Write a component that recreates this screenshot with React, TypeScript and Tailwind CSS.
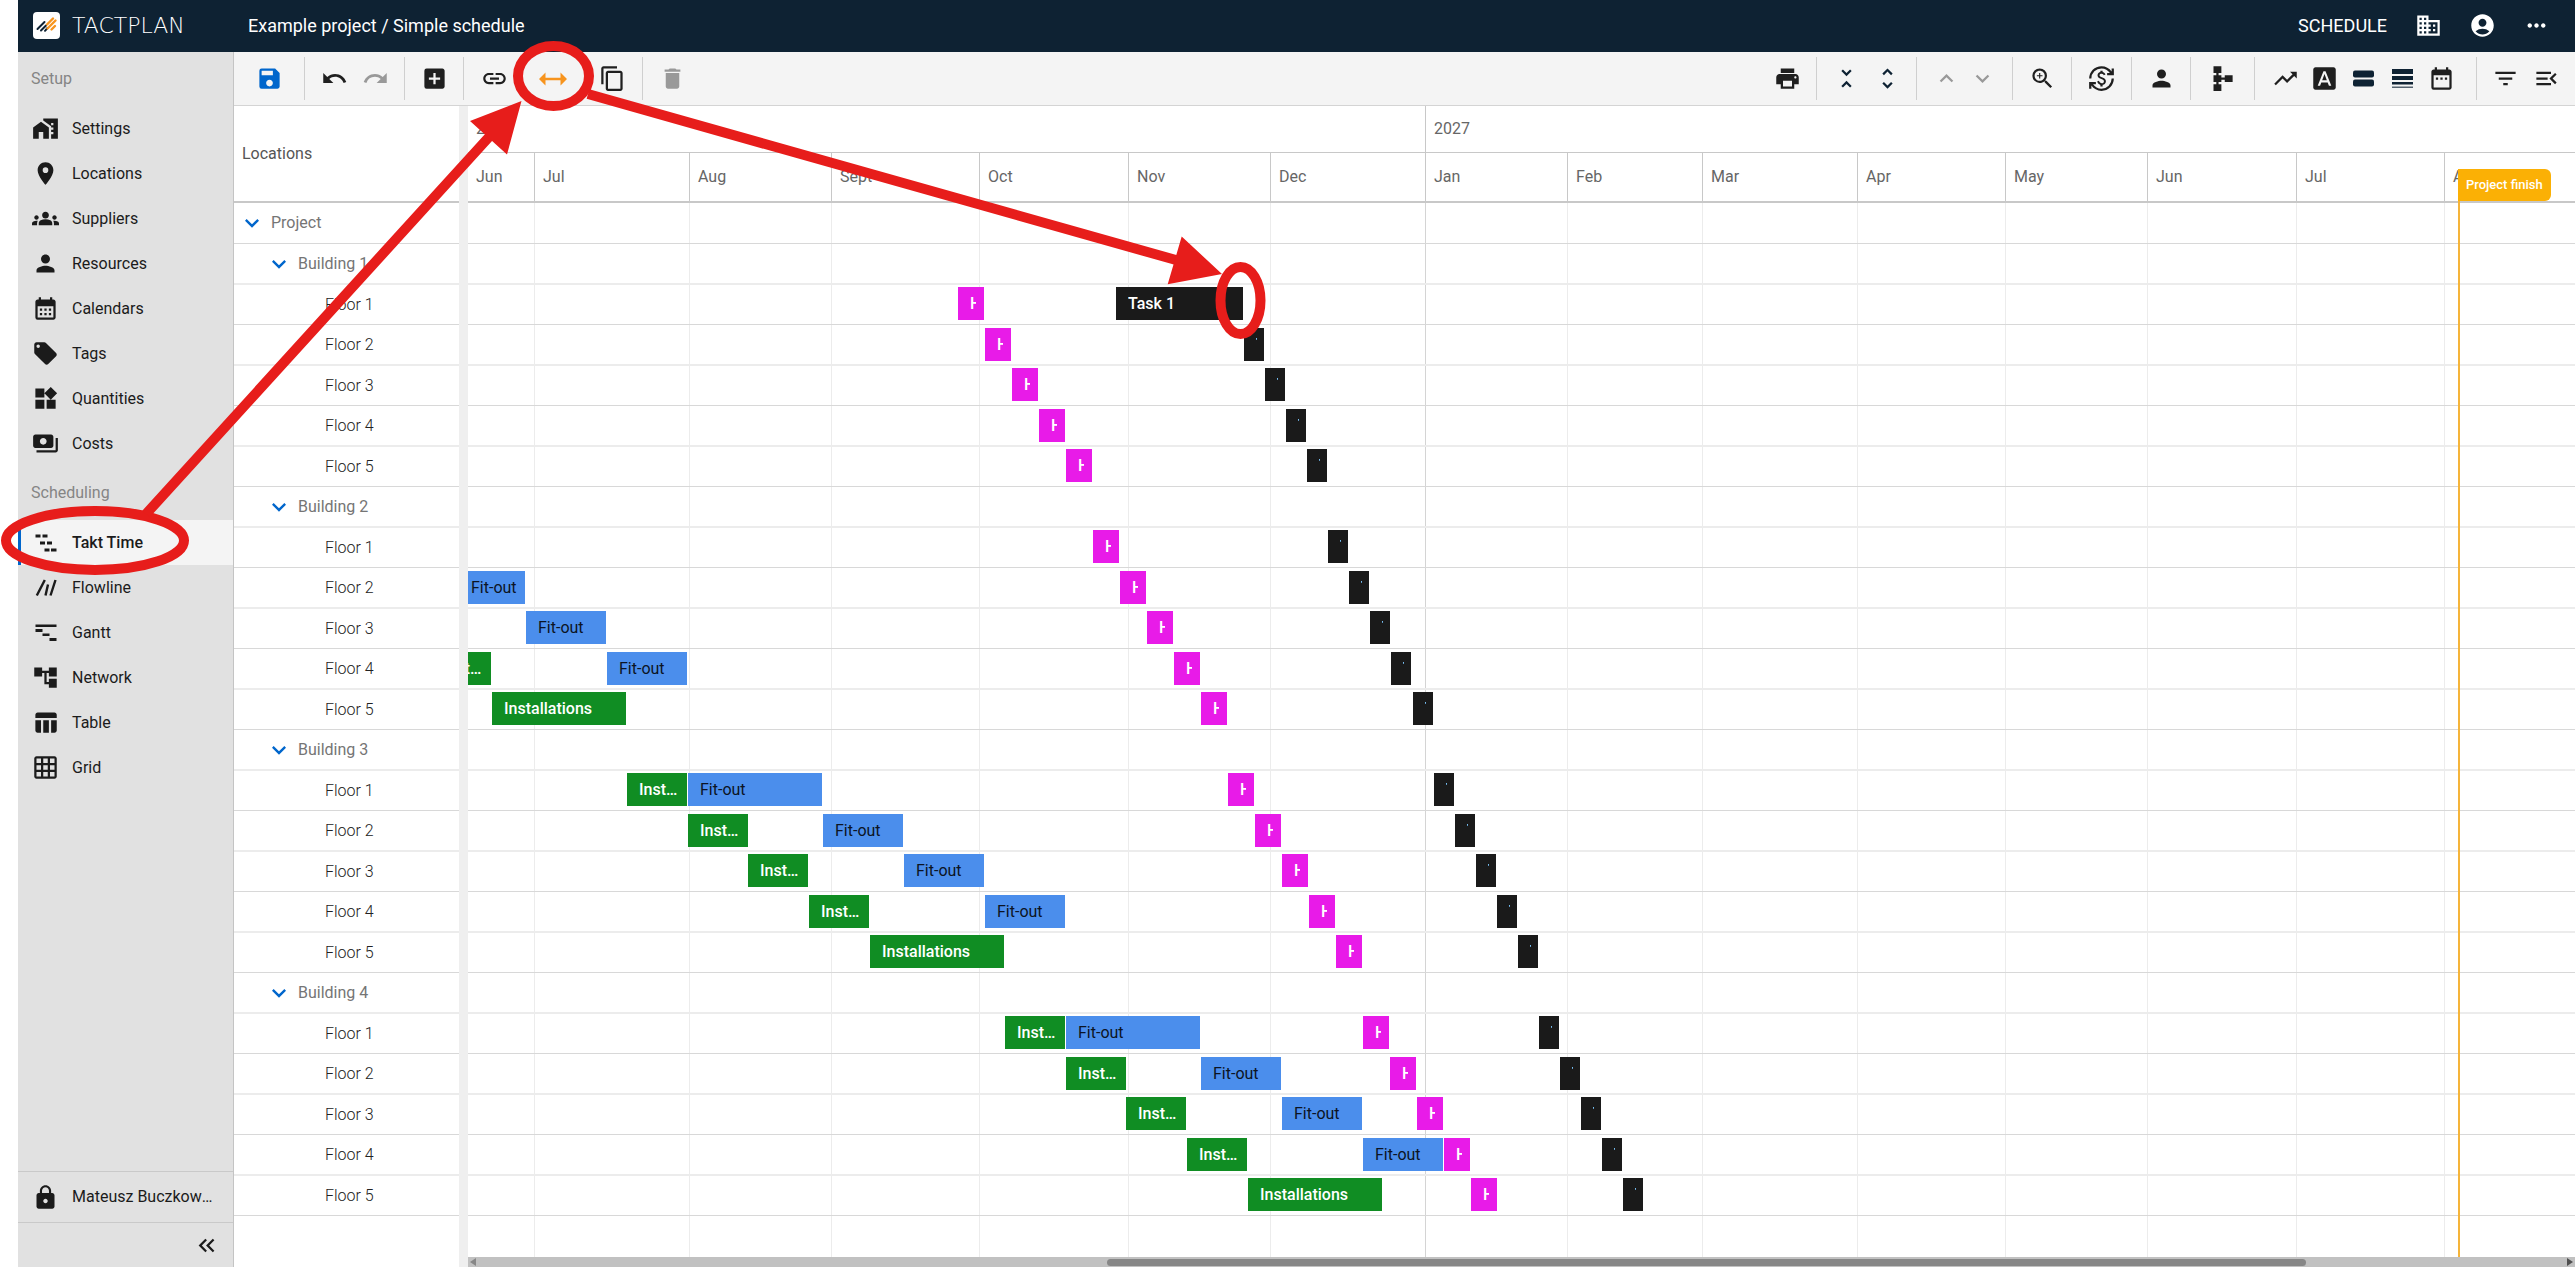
import type { ComponentType, ReactNode } from "react";
import {
  MdAccountCircle,
  MdAccountTree,
  MdAddBox,
  MdBusiness,
  MdCalendarMonth,
  MdContentCopy,
  MdCurrencyExchange,
  MdDateRange,
  MdDelete,
  MdExpandLess,
  MdExpandMore,
  MdFilterList,
  MdFontDownload,
  MdGridOn,
  MdGroups,
  MdKeyboardDoubleArrowLeft,
  MdLink,
  MdLocalOffer,
  MdLocationOn,
  MdLock,
  MdMapsHomeWork,
  MdMenuOpen,
  MdMoreHoriz,
  MdPayments,
  MdPerson,
  MdPrint,
  MdRedo,
  MdSave,
  MdSchema,
  MdTableChart,
  MdTrendingUp,
  MdUndo,
  MdUnfoldLess,
  MdUnfoldMore,
  MdWidgets,
  MdZoomIn,
} from "react-icons/md";

type IconType = ComponentType<{ className?: string }>;

/* ---------- custom icons ---------- */

function TaktIcon({ className }: { className?: string }) {
  return (
    <svg viewBox="0 0 27 27" className={className} fill="currentColor" aria-hidden="true">
      <path d="M3.5 5.5h5v3h-5zM10.5 5.5h5v3h-5zM8 12.5h5v3H8zM15 12.5h5v3h-5zM12.500 19.500h5v3h-5zM19 19.500h5.500v3H19z" />
    </svg>
  );
}

function FlowlineIcon({ className }: { className?: string }) {
  return (
    <svg viewBox="0 0 27 27" className={className} fill="none" stroke="currentColor" strokeWidth="2.4" aria-hidden="true">
      <path d="M4.800 21.500L12.800 6M13.500 21.500L16 10.500M18.500 21.500L23.500 6" />
    </svg>
  );
}

function GanttIcon({ className }: { className?: string }) {
  return (
    <svg viewBox="0 0 27 27" className={className} fill="currentColor" aria-hidden="true">
      <path d="M3.500 5.500h21V8h-21zM3.500 10h7v3h-7zM10.500 14.500h7v2.500h-7zM17.500 19h7v3h-7z" />
    </svg>
  );
}

function ResizeIcon({ className }: { className?: string }) {
  return (
    <svg viewBox="0 0 28 28" className={className} fill="currentColor" aria-hidden="true">
      <path d="M0 14l6.500-6.500v5.300h15V7.500L28 14l-6.500 6.500v-5.300h-15v5.300z" />
    </svg>
  );
}

function TwoRowsIcon({ className }: { className?: string }) {
  return (
    <svg viewBox="0 0 27 27" className={className} fill="#0e2233" aria-hidden="true">
      <rect x="3" y="5.500" width="21" height="7" rx="2" />
      <rect x="3" y="14.500" width="21" height="7" rx="2" />
    </svg>
  );
}

function ManyRowsIcon({ className }: { className?: string }) {
  return (
    <svg viewBox="0 0 27 27" className={className} fill="#0e2233" aria-hidden="true">
      <path d="M3 4h21v5H3zM3 11h21v4H3zM3 17h21v2.500H3z" />
      <path d="M3 21.500h21v1.500H3z" opacity="0.7" />
    </svg>
  );
}

function LogoMark() {
  return (
    <svg viewBox="0 0 27 27" className="size-[27px]" fill="none" strokeLinecap="round" strokeWidth="2" aria-hidden="true">
      <rect width="27" height="27" rx="4" fill="#fff" />
      <path d="M4.500 17L11.500 10M8 18.500L13 13.500M12 18.800L14.500 16" stroke="#0e2233" />
      <path d="M14 12.500L20 6.500M14.500 16.500L22.500 8.500M18.500 17.500L22 14" stroke="#f7941d" strokeWidth="2.400" />
    </svg>
  );
}

/* ---------- header ---------- */

function Header() {
  return (
    <header className="flex h-[52px] shrink-0 items-center bg-[#0e2233] pb-px pl-[15px] text-white">
      <a href="#home" className="flex w-[215px] items-center gap-3">
        <LogoMark />
        <span className="font-['DejaVu_Sans',sans-serif] text-[22px] leading-6 font-extralight">TACTPLAN</span>
      </a>
      <h1 className="flex-1 text-[18px] leading-6">Example project / Simple schedule</h1>
      <nav className="flex items-center pr-3">
        <a href="#schedule" className="mr-[14px] text-[18px] leading-6">
          SCHEDULE
        </a>
        <HeaderButton label="Company" icon={MdBusiness} />
        <HeaderButton label="Account" icon={MdAccountCircle} />
        <HeaderButton label="More" icon={MdMoreHoriz} />
      </nav>
    </header>
  );
}

function HeaderButton({ label, icon: Icon }: { label: string; icon: IconType }) {
  return (
    <button type="button" aria-label={label} className="flex w-[54px] justify-center">
      <Icon className="size-[27px]" />
    </button>
  );
}

/* ---------- sidebar ---------- */

const setupItems: [string, IconType][] = [
  ["Settings", MdMapsHomeWork],
  ["Locations", MdLocationOn],
  ["Suppliers", MdGroups],
  ["Resources", MdPerson],
  ["Calendars", MdCalendarMonth],
  ["Tags", MdLocalOffer],
  ["Quantities", MdWidgets],
  ["Costs", MdPayments],
];

const schedulingItems: [string, IconType][] = [
  ["Takt Time", TaktIcon],
  ["Flowline", FlowlineIcon],
  ["Gantt", GanttIcon],
  ["Network", MdAccountTree],
  ["Table", MdTableChart],
  ["Grid", MdGridOn],
];

function SideGroup({ title, items }: { title: string; items: [string, IconType][] }) {
  return (
    <section>
      <h2 className="flex h-[54px] items-center px-[13px] text-[#858585]">{title}</h2>
      <ul>
        {items.map(([name, Icon]) => {
          const active = name === "Takt Time";
          return (
            <li key={name}>
              <a
                href={"#" + name}
                className={
                  active
                    ? "flex h-[45px] items-center gap-[13px] border-l-3 border-[#0066cc] bg-[#f4f4f4] pl-[11px] font-medium"
                    : "flex h-[45px] items-center gap-[13px] border-l-3 border-transparent pl-[11px]"
                }
              >
                <Icon className="size-[27px]" />
                {name}
              </a>
            </li>
          );
        })}
      </ul>
    </section>
  );
}

function Sidebar() {
  return (
    <aside className="flex w-[216px] shrink-0 flex-col border-r border-[#c4c4c4] bg-[#e1e1e1] text-[#1b1b1b]">
      <nav className="flex-1">
        <SideGroup title="Setup" items={setupItems} />
        <SideGroup title="Scheduling" items={schedulingItems} />
      </nav>
      <button type="button" className="flex h-[51px] items-center gap-[13px] border-t border-[#c9c9c9] px-[14px]">
        <MdLock className="size-[27px] shrink-0" />
        <span className="truncate">Mateusz Buczkowski</span>
      </button>
      <div className="flex h-[45px] items-center justify-end border-t border-[#c9c9c9] pr-[13px]">
        <button type="button" aria-label="Collapse sidebar">
          <MdKeyboardDoubleArrowLeft className="size-[27px]" />
        </button>
      </div>
    </aside>
  );
}

/* ---------- toolbar ---------- */

function Group({ width, last, children }: { width: string; last?: boolean; children: ReactNode }) {
  return (
    <div
      className={
        "flex h-[43px] items-center justify-center " + width + (last ? "" : " border-r border-[#cfcfcf]")
      }
    >
      {children}
    </div>
  );
}

function Tool({
  label,
  icon: Icon,
  width = "w-[41px]",
  tone = "text-[#1f1f1f]",
  size = "size-[27px]",
}: {
  label: string;
  icon: IconType;
  width?: string;
  tone?: string;
  size?: string;
}) {
  return (
    <button type="button" aria-label={label} className={"flex justify-center " + width + " " + tone}>
      <Icon className={size + " shrink-0"} />
    </button>
  );
}

function Toolbar() {
  return (
    <div role="toolbar" className="flex h-[54px] shrink-0 items-center justify-between border-b border-[#d4d4d4] bg-[#f4f4f4]">
      <div className="flex">
        <Group width="w-[71px]">
          <Tool label="Save" icon={MdSave} tone="text-[#0066cc]" />
        </Group>
        <Group width="w-[100px]">
          <Tool label="Undo" icon={MdUndo} />
          <Tool label="Redo" icon={MdRedo} tone="text-[#999999]" />
        </Group>
        <Group width="w-[59px]">
          <Tool label="Add" icon={MdAddBox} />
        </Group>
        <Group width="w-[179px]">
          <Tool label="Link" icon={MdLink} width="w-[59px]" />
          <Tool label="Resize" icon={ResizeIcon} width="w-[59px]" tone="text-[#f7941d]" size="size-[28px]" />
          <Tool label="Copy" icon={MdContentCopy} width="w-[59px]" />
        </Group>
        <Group width="w-[59px]" last>
          <Tool label="Delete" icon={MdDelete} tone="text-[#999999]" />
        </Group>
      </div>
      <div className="flex">
        <Group width="w-[59px]">
          <Tool label="Print" icon={MdPrint} />
        </Group>
        <Group width="w-[100px]">
          <Tool label="Collapse rows" icon={MdUnfoldLess} tone="text-[#0e2233]" />
          <Tool label="Expand rows" icon={MdUnfoldMore} tone="text-[#0e2233]" />
        </Group>
        <Group width="w-[96px]">
          <Tool label="Previous" icon={MdExpandLess} width="w-[36px]" tone="text-[#999999]" />
          <Tool label="Next" icon={MdExpandMore} width="w-[36px]" tone="text-[#999999]" />
        </Group>
        <Group width="w-[59px]">
          <Tool label="Zoom in" icon={MdZoomIn} />
        </Group>
        <Group width="w-[60px]">
          <Tool label="Currency" icon={MdCurrencyExchange} />
        </Group>
        <Group width="w-[59px]">
          <Tool label="People" icon={MdPerson} />
        </Group>
        <Group width="w-[64px]">
          <Tool label="Structure" icon={MdSchema} />
        </Group>
        <Group width="w-[222px] pr-1">
          <Tool label="Progress" icon={MdTrendingUp} width="w-[39px]" />
          <Tool label="Labels" icon={MdFontDownload} width="w-[39px]" />
          <Tool label="Two rows" icon={TwoRowsIcon} width="w-[39px]" />
          <Tool label="Many rows" icon={ManyRowsIcon} width="w-[39px]" />
          <Tool label="Dates" icon={MdDateRange} width="w-[39px]" />
        </Group>
        <Group width="w-[98px]" last>
          <Tool label="Filter" icon={MdFilterList} />
          <Tool label="Open panel" icon={MdMenuOpen} />
        </Group>
      </div>
    </div>
  );
}

/* ---------- schedule data ---------- */

type Kind = "install" | "fit" | "hand" | "task";
type Bar = [kind: Kind, x: number, width: number];

const floorBars: Bar[][][] = [
  [
    [["hand", 490, 26], ["task", 648, 127]],
    [["hand", 517, 26], ["task", 776, 20]],
    [["hand", 544, 26], ["task", 797, 20]],
    [["hand", 571, 26], ["task", 818, 20]],
    [["hand", 598, 26], ["task", 839, 20]],
  ],
  [
    [["hand", 625, 26], ["task", 860, 20]],
    [["fit", -9, 66], ["hand", 652, 26], ["task", 881, 20]],
    [["fit", 58, 80], ["hand", 679, 26], ["task", 902, 20]],
    [["install", -37, 60], ["fit", 139, 80], ["hand", 706, 26], ["task", 923, 20]],
    [["install", 24, 134], ["hand", 733, 26], ["task", 945, 20]],
  ],
  [
    [["install", 159, 60], ["fit", 220, 134], ["hand", 760, 26], ["task", 966, 20]],
    [["install", 220, 60], ["fit", 355, 80], ["hand", 787, 26], ["task", 987, 20]],
    [["install", 280, 60], ["fit", 436, 80], ["hand", 814, 26], ["task", 1008, 20]],
    [["install", 341, 60], ["fit", 517, 80], ["hand", 841, 26], ["task", 1029, 20]],
    [["install", 402, 134], ["hand", 868, 26], ["task", 1050, 20]],
  ],
  [
    [["install", 537, 60], ["fit", 598, 134], ["hand", 895, 26], ["task", 1071, 20]],
    [["install", 598, 60], ["fit", 733, 80], ["hand", 922, 26], ["task", 1092, 20]],
    [["install", 658, 60], ["fit", 814, 80], ["hand", 949, 26], ["task", 1113, 20]],
    [["install", 719, 60], ["fit", 895, 80], ["hand", 976, 26], ["task", 1134, 20]],
    [["install", 780, 134], ["hand", 1003, 26], ["task", 1155, 20]],
  ],
];

type Row = { name: string; level: 0 | 1 | 2; bars: Bar[] };

const rows: Row[] = [
  { name: "Project", level: 0, bars: [] },
  ...floorBars.flatMap((floors, b): Row[] => [
    { name: `Building ${b + 1}`, level: 1, bars: [] },
    ...floors.map((bars, f): Row => ({ name: `Floor ${f + 1}`, level: 2, bars })),
  ]),
];

function rowClass(index: number) {
  if (index === 0) return "h-[41px] border-b border-[#d8d8d8]";
  return index % 2 ? "h-[41px] border-b-2 border-[#ececec]" : "h-[40px] border-b border-[#d8d8d8]";
}

const kindClass: Record<Kind, string> = {
  install: "bg-[#108d23] text-white font-medium",
  fit: "bg-[#4b8eec] text-[#0c1424]",
  hand: "bg-[#e81be8] text-white font-medium",
  task: "bg-[#1a1a1a] text-white font-medium",
};

const kindLabel: Record<Kind, string> = {
  install: "Installations",
  fit: "Fit-out",
  hand: "H",
  task: "Task 1",
};

/* ---------- locations tree ---------- */

function Locations() {
  return (
    <div className="w-[225px] shrink-0 bg-white">
      <div className="flex h-[97px] items-center border-b-2 border-[#c8c8c8] px-2 text-[#555555]">Locations</div>
      <ul>
        {rows.map((row, i) => (
          <li key={i} className={"flex items-center " + rowClass(i)}>
            {row.level === 2 ? (
              <span className="pl-[91px] font-light text-[#222222]">{row.name}</span>
            ) : (
              <button
                type="button"
                aria-expanded="true"
                className={
                  row.level === 0
                    ? "flex items-center gap-[5px] pl-[4px] text-[#757575]"
                    : "flex items-center gap-[5px] pl-[31px] text-[#757575]"
                }
              >
                <MdExpandMore className="size-[28px] text-[#0066cc]" />
                {row.name}
              </button>
            )}
          </li>
        ))}
      </ul>
    </div>
  );
}

/* ---------- timeline ---------- */

const months: [string, string][] = [
  ["Jun", "w-[67px]"],
  ["Jul", "w-[155px]"],
  ["Aug", "w-[142px]"],
  ["Sept", "w-[148px]"],
  ["Oct", "w-[149px]"],
  ["Nov", "w-[142px]"],
  ["Dec", "w-[155px]"],
  ["Jan", "w-[142px]"],
  ["Feb", "w-[135px]"],
  ["Mar", "w-[155px]"],
  ["Apr", "w-[148px]"],
  ["May", "w-[142px]"],
  ["Jun", "w-[149px]"],
  ["Jul", "w-[148px]"],
  ["Aug", "flex-1"],
];

function TaskBar({ bar: [kind, x, width], top }: { bar: Bar; top: string }) {
  const short = kind === "task" && width < 30;
  return (
    <div
      className={"absolute flex h-[33px] items-center overflow-hidden pr-2 pl-3 " + top + " " + kindClass[kind]}
      style={{ left: x, width }}
    >
      <span className={width < 30 ? "min-w-px overflow-hidden whitespace-nowrap" : "truncate"}>
        {short ? "T" : kindLabel[kind]}
      </span>
    </div>
  );
}

function Timeline() {
  return (
    <div className="flex min-w-0 flex-1 flex-col">
      <div className="relative flex-1 overflow-hidden bg-white">
        <div className="flex h-[47px] border-b border-[#c8c8c8] text-[#666666]">
          <div className="flex w-[958px] items-center border-r border-[#c8c8c8] pl-2">2026</div>
          <div className="flex items-center pl-2">2027</div>
        </div>
        <div className="flex h-[50px] border-b-2 border-[#c8c8c8] text-[#666666]">
          {months.map(([name, width], i) => (
            <div
              key={i}
              className={
                "flex shrink-0 items-center pl-2 " + width + (i < months.length - 1 ? " border-r border-[#c8c8c8]" : "")
              }
            >
              {name}
            </div>
          ))}
        </div>
        <ul>
          {rows.map((row, i) => (
            <li key={i} className={"relative z-10 " + rowClass(i)}>
              {row.bars.map((bar, k) => (
                <TaskBar key={k} bar={bar} top={i % 2 ? "top-[3px]" : "top-[2px]"} />
              ))}
            </li>
          ))}
        </ul>
        <div className="absolute inset-x-0 top-[97px] bottom-0 flex" aria-hidden="true">
          {months.slice(0, -1).map(([name, width], i) => (
            <div
              key={i}
              className={"shrink-0 border-r " + width + (name === "Dec" ? " border-[#d4d4d4]" : " border-[#ececec]")}
            />
          ))}
        </div>
        <div className="absolute top-[63px] bottom-0 left-[1990px] z-20 flex flex-col items-start">
          <span className="flex h-8 items-center rounded-r-md bg-[#fbb005] px-2 text-[13px] leading-4 font-medium text-white">
            Project finish
          </span>
          <span className="w-[2px] flex-1 bg-[#f5b43a]" />
        </div>
      </div>
      <div className="flex h-[10px] shrink-0 items-center justify-between bg-[#c1c1c1] px-[2px]" aria-hidden="true">
        <svg viewBox="0 0 6 8" className="h-2 w-[6px]" fill="#878787">
          <path d="M6 0v8L0 4z" />
        </svg>
        <div className="ml-[30%] h-[7px] w-[57%] rounded-full bg-[#878787]" />
        <div className="flex-1" />
        <svg viewBox="0 0 6 8" className="h-2 w-[6px]" fill="#505050">
          <path d="M0 0v8l6-4z" />
        </svg>
      </div>
    </div>
  );
}

/* ---------- red markers drawn over the page ---------- */

function Markers() {
  return (
    <svg
      className="pointer-events-none absolute top-0 left-0 z-30 h-[600px] w-[1400px]"
      viewBox="0 0 1400 600"
      fill="none"
      stroke="#e71d1b"
      strokeWidth="10"
      aria-hidden="true"
    >
      <ellipse cx="95" cy="540.500" rx="89" ry="29.500" />
      <ellipse cx="553.500" cy="76" rx="35.500" ry="30" />
      <ellipse cx="1240.500" cy="300.500" rx="20" ry="33.500" />
      <path d="M146 514L489 137M588 94L1176 260" />
      <path d="M521.500 101L470 121L507 154.500ZM1222 274L1181.700 236.500L1167.700 284.300Z" fill="#e71d1b" stroke="none" />
    </svg>
  );
}

export default function App() {
  return (
    <div className="relative flex h-screen flex-col overflow-hidden bg-white pl-[18px] font-['Roboto',sans-serif] text-[16px] leading-5">
      <Header />
      <div className="flex min-h-0 flex-1">
        <Sidebar />
        <main className="flex min-w-0 flex-1 flex-col">
          <Toolbar />
          <div className="flex min-h-0 flex-1">
            <Locations />
            <div className="w-[9px] shrink-0 bg-[#efefef]" />
            <Timeline />
          </div>
        </main>
      </div>
      <Markers />
    </div>
  );
}
